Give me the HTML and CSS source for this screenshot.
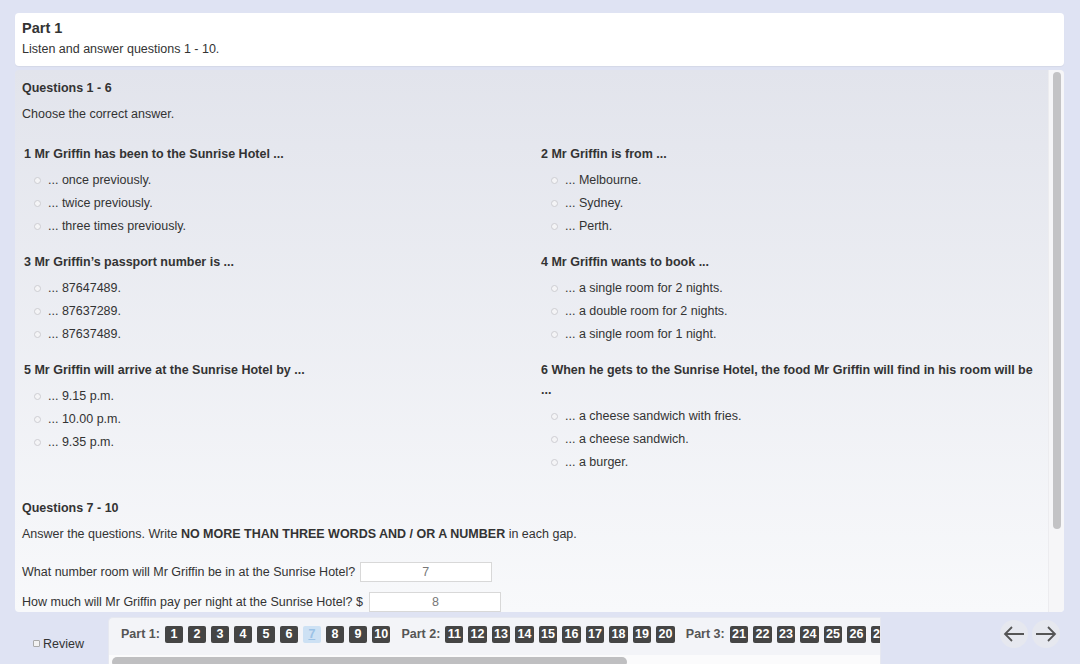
FILE: index.html
```html
<!DOCTYPE html>
<html>
  <head>
    <meta charset="utf-8">
    <title>Listening test - Part 1</title>
    <link rel="stylesheet" href="styles.css">
  </head>
  <body>
    <div class="page">
      <div class="intro">
        <h2>Part 1</h2>
        <p>Listen and answer questions 1 - 10.</p>
      </div>

      <div class="panel">
        <div class="content">
          <h3>Questions 1 - 6</h3>
          <p class="task">Choose the correct answer.</p>

          <div class="questions">
            <div class="question">
              <h4>1 Mr Griffin has been to the Sunrise Hotel ...</h4>
              <ul>
                <li><span class="radio"></span>... once previously.</li>
                <li><span class="radio"></span>... twice previously.</li>
                <li><span class="radio"></span>... three times previously.</li>
              </ul>
            </div>
            <div class="question">
              <h4>2 Mr Griffin is from ...</h4>
              <ul>
                <li><span class="radio"></span>... Melbourne.</li>
                <li><span class="radio"></span>... Sydney.</li>
                <li><span class="radio"></span>... Perth.</li>
              </ul>
            </div>
            <div class="question">
              <h4>3 Mr Griffin’s passport number is ...</h4>
              <ul>
                <li><span class="radio"></span>... 87647489.</li>
                <li><span class="radio"></span>... 87637289.</li>
                <li><span class="radio"></span>... 87637489.</li>
              </ul>
            </div>
            <div class="question">
              <h4>4 Mr Griffin wants to book ...</h4>
              <ul>
                <li><span class="radio"></span>... a single room for 2 nights.</li>
                <li><span class="radio"></span>... a double room for 2 nights.</li>
                <li><span class="radio"></span>... a single room for 1 night.</li>
              </ul>
            </div>
            <div class="question">
              <h4>5 Mr Griffin will arrive at the Sunrise Hotel by ...</h4>
              <ul>
                <li><span class="radio"></span>... 9.15 p.m.</li>
                <li><span class="radio"></span>... 10.00 p.m.</li>
                <li><span class="radio"></span>... 9.35 p.m.</li>
              </ul>
            </div>
            <div class="question">
              <h4>6 When he gets to the Sunrise Hotel, the food Mr Griffin will find in his room will be ...</h4>
              <ul>
                <li><span class="radio"></span>... a cheese sandwich with fries.</li>
                <li><span class="radio"></span>... a cheese sandwich.</li>
                <li><span class="radio"></span>... a burger.</li>
              </ul>
            </div>
          </div>

          <h3 class="second">Questions 7 - 10</h3>
          <p class="task">Answer the questions. Write <b>NO MORE THAN THREE WORDS AND / OR A NUMBER</b> in each gap.</p>

          <div class="gap first">What number room will Mr Griffin be in at the Sunrise Hotel? <span class="field">7</span></div>
          <div class="gap">How much will Mr Griffin pay per night at the Sunrise Hotel? $ <span class="field">8</span></div>
        </div>
        <div class="scrollbar"><div class="thumb"></div></div>
      </div>
    </div>

    <div class="footer">
      <label class="review"><span class="check"></span>Review</label>
      <div class="nav">
        <div class="nav-row">
          <span class="part">Part 1:</span>
          <span class="num">1</span><span class="num">2</span><span class="num">3</span><span class="num">4</span><span class="num">5</span>
          <span class="num">6</span><span class="num current">7</span><span class="num">8</span><span class="num">9</span><span class="num">10</span>
          <span class="part">Part 2:</span>
          <span class="num">11</span><span class="num">12</span><span class="num">13</span><span class="num">14</span><span class="num">15</span>
          <span class="num">16</span><span class="num">17</span><span class="num">18</span><span class="num">19</span><span class="num">20</span>
          <span class="part">Part 3:</span>
          <span class="num">21</span><span class="num">22</span><span class="num">23</span><span class="num">24</span><span class="num">25</span>
          <span class="num">26</span><span class="num">27</span>
        </div>
        <div class="hscroll"><div class="hthumb"></div></div>
      </div>
      <div class="arrows">
        <button class="arrow" title="Previous">
          <svg width="22" height="16" viewBox="0 0 22 16"><path d="M21 8H2M9 1L2 8l7 7" fill="none" stroke="#555" stroke-width="1.8"/></svg>
        </button>
        <button class="arrow" title="Next">
          <svg width="22" height="16" viewBox="0 0 22 16"><path d="M1 8h19M13 1l7 7-7 7" fill="none" stroke="#555" stroke-width="1.8"/></svg>
        </button>
      </div>
    </div>
  </body>
</html>
```

FILE: styles.css
```css
* {
  box-sizing: border-box;
}
html, body {
  margin: 0;
  padding: 0;
  height: 100%;
  overflow: hidden;
}
body {
  background-color: #dfe3f3;
  color: #333;
  font-family: 'Liberation Sans', Arial, Helvetica, sans-serif;
  font-size: 12.5px;
}
.page {
  padding: 13px 16px 0 15px;
}
.intro {
  background-color: #fff;
  border-radius: 4px;
  height: 53px;
  padding: 5px 7px 4px;
  box-shadow: 0 1px 1px rgba(0, 0, 0, 0.05);
}
.intro h2 {
  margin: 0;
  font-size: 14.5px;
  line-height: 20px;
  font-weight: bold;
}
.intro p {
  margin: 1px 0 0;
  line-height: 20px;
}
.panel {
  margin-top: 4px;
  height: 542px;
  display: flex;
  overflow: hidden;
  border-radius: 4px;
  background: linear-gradient(#e2e4ec, #f8f9fb);
}
.content {
  flex: 1;
  padding: 9px 7px 0;
}
h3 {
  margin: 0;
  font-size: 12.5px;
  line-height: 18px;
  font-weight: bold;
}
h3.second {
  margin-top: 25px;
}
.task {
  margin: 8px 0 0;
  line-height: 18px;
}
.questions {
  margin-top: 21px;
  display: grid;
  grid-template-columns: 517px 1fr;
  row-gap: 14px;
}
.question h4 {
  margin: 0;
  padding-left: 2px;
  font-size: 12.5px;
  line-height: 20px;
  font-weight: bold;
}
.question ul {
  list-style: none;
  margin: 5px 0 0;
  padding: 0 0 0 12px;
}
.question li {
  line-height: 23px;
  display: flex;
  align-items: center;
}
.radio {
  width: 7px;
  height: 7px;
  border: 1px solid #cdcdd2;
  border-radius: 50%;
  background-color: #f4f4f6;
  margin-right: 7px;
}
.gap {
  margin-top: 8px;
  line-height: 22px;
}
.gap.first {
  margin-top: 18px;
}
.field {
  display: inline-block;
  width: 132px;
  height: 20px;
  line-height: 18px;
  vertical-align: middle;
  border: 1px solid #d8d8d8;
  background-color: #fff;
  color: #777;
  text-align: center;
  margin: -2px 0 0 1px;
}
.gap .field + .field,
.gap:last-child .field {
  margin-left: 3px;
}
.scrollbar {
  width: 16px;
  background-color: #f6f6f8;
  border-left: 1px solid #ececef;
  padding: 2px 3px 0 4px;
}
.thumb {
  height: 457px;
  border-radius: 5px;
  background-color: #c3c3c5;
}
.footer {
  display: flex;
  height: 52px;
}
.review {
  width: 108px;
  padding: 25px 0 0 33px;
  display: flex;
  align-items: center;
  height: 38px;
}
.check {
  width: 7px;
  height: 7px;
  border: 1px solid #aaa;
  border-radius: 1px;
  background-color: #f2f2f2;
  margin-right: 3px;
}
.nav {
  margin-top: 5px;
  width: 773px;
  overflow: hidden;
  background-color: #f3f4f8;
  border-top-left-radius: 5px;
  border: 1px solid #e6e8f0;
  border-bottom: none;
}
.nav-row {
  height: 37px;
  padding: 8px 0 0 12px;
  display: flex;
  white-space: nowrap;
}
.part {
  color: #555;
  font-weight: bold;
  line-height: 17px;
  margin-right: 5px;
}
.num + .part {
  margin-left: 6px;
}
.num {
  flex: none;
  min-width: 18px;
  height: 17px;
  padding: 0 2.3px;
  margin-right: 5px;
  border-radius: 2px;
  background-color: #454545;
  color: #fff;
  font-weight: bold;
  text-align: center;
  line-height: 17px;
}
.num.current {
  background-color: #cde1f4;
  color: #9bc2e6;
  text-decoration: underline;
}
.hscroll {
  height: 10px;
  background-color: #fbfbfc;
  padding: 2px 3px 0;
}
.hthumb {
  width: 515px;
  height: 10px;
  border-radius: 5px;
  background-color: #bfbfc1;
}
.arrows {
  margin-left: auto;
  padding: 8px 20px 0 0;
  display: flex;
  gap: 4px;
}
.arrow {
  width: 28px;
  height: 28px;
  border: none;
  border-radius: 50%;
  background-color: #e6e8ef;
  padding: 0;
  display: flex;
  align-items: center;
  justify-content: center;
}
```
